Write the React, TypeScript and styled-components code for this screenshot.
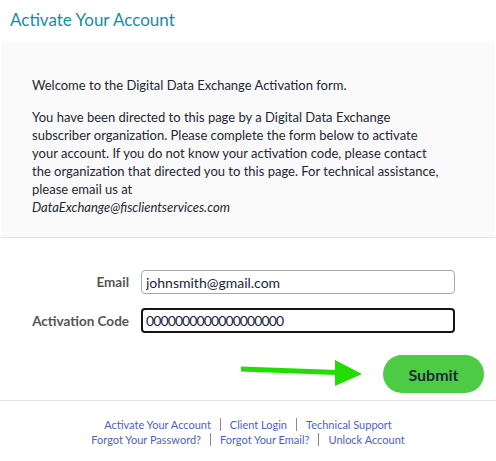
import React from "react";
import styled, { createGlobalStyle } from "styled-components";

const Global = createGlobalStyle`
  html, body { margin: 0; padding: 0; background: #ffffff; }
  body { font-family: Lato, "Open Sans", sans-serif; }
  * { box-sizing: border-box; }
`;

const Page = styled.div`
  width: 496px;
  display: flex;
  flex-direction: column;
`;

const Title = styled.h1`
  margin: 0;
  padding: 9px 10px 0 10px;
  height: 42px;
  font-size: 17px;
  line-height: 22px;
  font-weight: 400;
  color: #1b8ba3;
`;

const Panel = styled.section`
  margin: 0 1px;
  background: #fafafa;
  padding: 34px 31px 21px 31px;
  border-bottom: 1px solid #e4e4e4;
`;

const Para = styled.p`
  margin: 0 0 14px 0;
  font-size: 13px;
  line-height: 18px;
  color: #222833;
  &:last-child { margin-bottom: 0; }
`;

const Email = styled.em`
  font-style: italic;
`;

const Form = styled.form`
  display: grid;
  grid-template-columns: 129px 314px;
  column-gap: 12px;
  row-gap: 14px;
  align-items: center;
  padding: 32px 0 0 0;
`;

const Label = styled.label`
  text-align: right;
  font-size: 13.5px;
  font-weight: 700;
  color: #555555;
`;

const Input = styled.input<{ $focused?: boolean; $tight?: boolean }>`
  width: 100%;
  height: ${(p) => (p.$focused ? "25px" : "24px")};
  padding: 0 ${(p) => (p.$focused ? "3px" : "4px")};
  font-family: Lato, "Open Sans", sans-serif;
  font-size: 14px;
  letter-spacing: ${(p) => (p.$tight ? "-0.9px" : "0")};
  color: #1a2540;
  background: #ffffff;
  border: ${(p) => (p.$focused ? "2px solid #151515" : "1px solid #a8a8a8")};
  border-radius: 4px;
  outline: none;
`;

const Actions = styled.div`
  display: flex;
  justify-content: flex-end;
  align-items: center;
  gap: 20px;
  padding: 22px 12px 7px 0;
  border-bottom: 1px solid #e2e2e2;
`;

const Submit = styled.button`
  width: 101px;
  height: 38px;
  border: none;
  border-radius: 19px;
  background: #4dcb44;
  color: #1b2c3b;
  font-family: Lato, "Open Sans", sans-serif;
  font-size: 16px;
  font-weight: 700;
  cursor: pointer;
`;

const Footer = styled.nav`
  display: flex;
  flex-direction: column;
  align-items: center;
  padding-top: 16px;
`;

const LinkRow = styled.div`
  display: flex;
  align-items: center;
  height: 15px;
`;

const FooterLink = styled.a`
  font-size: 11px;
  line-height: 13px;
  color: #4c5fc3;
  text-decoration: none;
  padding: 0 9px;
  & + & { border-left: 1px solid #8a8a8a; }
`;

const Arrow = () => (
  <svg width="122" height="30" viewBox="0 0 122 30">
    <path d="M0 10 L96 13.5" stroke="#22dd00" strokeWidth="5" fill="none" />
    <path d="M94 1 L121 15 L94 27 Z" fill="#22dd00" />
  </svg>
);

export default function App() {
  return (
    <Page>
      <Global />
      <Title>Activate Your Account</Title>
      <Panel>
        <Para>Welcome to the Digital Data Exchange Activation form.</Para>
        <Para>
          You have been directed to this page by a Digital Data Exchange
          <br />
          subscriber organization. Please complete the form below to activate
          <br />
          your account. If you do not know your activation code, please contact
          <br />
          the organization that directed you to this page. For technical assistance,
          <br />
          please email us at
          <br />
          <Email>DataExchange@fisclientservices.com</Email>
        </Para>
      </Panel>
      <Form onSubmit={(e) => e.preventDefault()}>
        <Label htmlFor="email">Email</Label>
        <Input id="email" defaultValue="johnsmith@gmail.com" />
        <Label htmlFor="code">Activation Code</Label>
        <Input id="code" $focused $tight defaultValue="0000000000000000000" />
      </Form>
      <Actions>
        <Arrow />
        <Submit type="button">Submit</Submit>
      </Actions>
      <Footer>
        <LinkRow>
          <FooterLink href="#">Activate Your Account</FooterLink>
          <FooterLink href="#">Client Login</FooterLink>
          <FooterLink href="#">Technical Support</FooterLink>
        </LinkRow>
        <LinkRow>
          <FooterLink href="#">Forgot Your Password?</FooterLink>
          <FooterLink href="#">Forgot Your Email?</FooterLink>
          <FooterLink href="#">Unlock Account</FooterLink>
        </LinkRow>
      </Footer>
    </Page>
  );
}
